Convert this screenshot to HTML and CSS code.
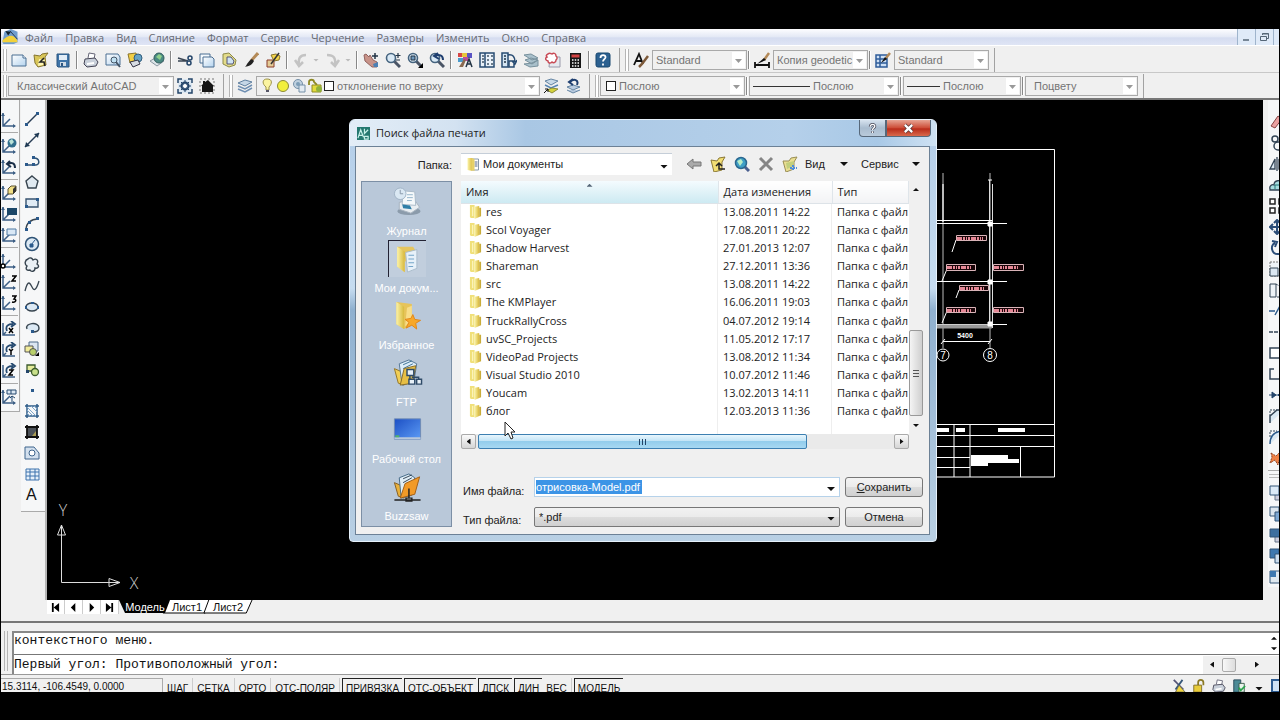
FILE: index.html
```html
<!DOCTYPE html>
<html lang="ru">
<head>
<meta charset="utf-8">
<title>AutoCAD</title>
<link rel="stylesheet" href="styles.css">
</head>
<body>
<svg class="defs" aria-hidden="true">
  <defs>
    <linearGradient id="gold" x1="0" x2="1"><stop offset="0" stop-color="#fbf3a8"/><stop offset="1" stop-color="#d8b93c"/></linearGradient>
    <linearGradient id="blue" x1="0" x2="1" y2="1"><stop offset="0" stop-color="#1c4fc4"/><stop offset="1" stop-color="#5c9bf5"/></linearGradient>
    <linearGradient id="page" x1="0" x2="1" y2="1"><stop offset="0" stop-color="#fff"/><stop offset="1" stop-color="#b4d3ee"/></linearGradient>
    <symbol id="folder" viewBox="0 0 14 16"><path d="M1 1h5v14H2l-1-1z" fill="#f0e07a"/><path d="M6 3l5-1v12l-5 2z" fill="url(#gold)"/><path d="M11 4h2v9l-2 1z" fill="#c9ac3a"/><path d="M4 3v10" stroke="#fffbd0"/></symbol>
    <symbol id="ucs" viewBox="0 0 16 16"><path d="M2 1v13h12M2 14l7-7" fill="none" stroke="#3d5f85" stroke-width="1.5"/><path d="M0 4l2-3 2 3M12 12l3 2-3 2" fill="#3d5f85"/></symbol>
    <symbol id="ucsr" viewBox="0 0 16 16"><path d="M2 2v12h12M2 14l3-3" fill="none" stroke="#3d5f85" stroke-width="1.5"/><path d="M6 10C4 5 7 3 12 3M10 0l4 3-4 3" fill="none" stroke="#25496f" stroke-width="1.8"/></symbol>
    <symbol id="sheets" viewBox="0 0 16 16"><path d="M1 5l7-3 7 2-7 4z" fill="#c5d6e6" stroke="#5f7f9f"/><path d="M1 8l7 3 7-4M1 11l7 3 7-4" fill="none" stroke="#6f8fb2" stroke-width="1.5"/></symbol>
    <symbol id="printer" viewBox="0 0 16 16"><path d="M5 6l1-5 6 1-1 5" fill="#fff" stroke="#667"/><path d="M2 7l10-1 3 4-2 4-9 1-3-3z" fill="#c9d0da" stroke="#445"/><path d="M4 12l7-1" stroke="#fff" stroke-width="2"/></symbol>
    <symbol id="zoomer" viewBox="0 0 16 16"><path d="M9 9l6 6" stroke="#4a5566" stroke-width="3"/><circle cx="6" cy="6" r="4.5" fill="#d9e9f5" stroke="#46647f" stroke-width="1.6"/></symbol>
    <symbol id="brush" viewBox="0 0 16 16"><path d="M15 1L8 9" stroke="#b48a58" stroke-width="3"/><path d="M9 7l2 2c-2 4-5 5-9 6 2-2 3-6 7-8z" fill="#222"/></symbol>
  </defs>
</svg>

<main class="app">
  <header class="menubar">
    <svg class="logo" viewBox="0 0 16 16"><path d="M0 14L2 3l7-3 7 3v11l-4 2H1z" fill="#6f9ccc"/><path d="M3 2l6 1-3 4z" fill="#10202a"/><path d="M0 12c4-4 9-6 12-4 2 2 4 3 4 6H0z" fill="#f2d13a"/><path d="M8 2l8 9" stroke="#23364e"/></svg>
    <nav class="menus">
      <button>Файл</button><button>Правка</button><button>Вид</button><button>Слияние</button><button>Формат</button><button>Сервис</button><button>Черчение</button><button>Размеры</button><button>Изменить</button><button>Окно</button><button>Справка</button>
    </nav>
    <div class="win-btns">
      <button aria-label="Свернуть"><svg viewBox="0 0 12 12"><path d="M3 9h6" stroke="#567" stroke-width="1.5"/></svg></button>
      <button aria-label="Восстановить"><svg viewBox="0 0 12 12"><path d="M4.500 4V2.500h6v5H9M2.500 5.500h6v4h-6zM4.500 3h6" fill="none" stroke="#567"/></svg></button>
      <button aria-label="Закрыть"><svg viewBox="0 0 12 12"><path d="M3 3l6 6M9 3l-6 6" stroke="#567"/></svg></button>
    </div>
  </header>

  <section class="bars">
    <div class="bar" role="toolbar" aria-label="Стандартная">
      <span class="grip"></span>
      <button class="ib" aria-label="Создать"><svg viewBox="0 0 16 16"><path d="M1 3h11l3 3v8H1z" fill="url(#page)" stroke="#4b6e92"/><path d="M12 3v3h3" fill="#fff" stroke="#4b6e92"/></svg></button>
      <button class="ib" aria-label="Открыть"><svg viewBox="0 0 16 16"><path d="M1 3l6 1 2-2 6-1-3 4 1 8-8 2-3-4z" fill="#d9c658" stroke="#857430"/><path d="M6 7l6 1-2 5-5 1z" fill="#fff6b4"/><path d="M11 6l-4 4h4l1 4" stroke="#222" fill="none" stroke-width="1.500"/></svg></button>
      <button class="ib" aria-label="Сохранить файл"><svg viewBox="0 0 16 16"><path d="M2 2h12v13H3l-1-1z" fill="#3f74a8" stroke="#2d5680"/><path d="M4 3h8v5H4z" fill="#e2edf7"/><path d="M5 10h6v4H5z" fill="#cfdbe6"/><path d="M6 11h2v3H6z" fill="#2d5680"/></svg></button>
      <span class="sep"></span>
      <button class="ib" aria-label="Печать"><svg><use href="#printer"/></svg></button>
      <button class="ib" aria-label="Просмотр"><svg viewBox="0 0 16 16"><path d="M1 2h12l2 3v8H1z" fill="url(#page)" stroke="#4b6e92"/><circle cx="9" cy="8" r="3" fill="#bfe0f2" stroke="#456"/><path d="M11 10l4 5" stroke="#456" stroke-width="2"/></svg></button>
      <button class="ib" aria-label="Публикация"><svg viewBox="0 0 16 16"><path d="M1 2l8-1 2 7-8 3z" fill="#f2cf45" stroke="#8a742d"/><circle cx="11" cy="6" r="4" fill="#67a3c4" stroke="#315d7c"/><path d="M3 10l8-2 2 4-7 3z" fill="#d7dce3" stroke="#334"/></svg></button>
      <button class="ib" aria-label="DWF"><svg viewBox="0 0 16 16"><path d="M1 9l7-4 7 4-7 5z" fill="#dbe4e8" stroke="#8a98a2"/><circle cx="10" cy="6" r="5" fill="#4b8a83" stroke="#315d5c"/><path d="M7 5l3-3 3 2-2 4z" fill="#8fd08b"/></svg></button>
      <span class="sep"></span>
      <button class="ib" aria-label="Вырезать"><svg viewBox="0 0 16 16"><path d="M1 6l10 3M1 9h10" stroke="#3a4654" stroke-width="1.500"/><circle cx="13" cy="6" r="2" fill="none" stroke="#24456a" stroke-width="1.500"/><circle cx="12" cy="11" r="2" fill="none" stroke="#24456a" stroke-width="1.500"/></svg></button>
      <button class="ib" aria-label="Копировать"><svg viewBox="0 0 16 16"><path d="M1 2h10v9H1z" fill="#f4f9fd" stroke="#4b6e92"/><path d="M4 5h9l2 2v8H4z" fill="url(#page)" stroke="#4b6e92"/></svg></button>
      <button class="ib" aria-label="Вставить"><svg viewBox="0 0 16 16"><path d="M2 2l6-1 7 7-1 5-6 2-6-3z" fill="#e3dc8a" stroke="#8d8a48"/><path d="M6 5l4 0 3 4-1 3H6z" fill="#cfe3f3" stroke="#557"/></svg></button>
      <button class="ib" aria-label="Кисть"><svg><use href="#brush"/></svg></button>
      <button class="ib" aria-label="Редактор блоков"><svg viewBox="0 0 16 16"><path d="M2 8h7v7H2z" fill="#e4cb96" stroke="#8a3d2a"/><path d="M6 3l5-1 4 2-1 4-5 1z" fill="#f3d54a" stroke="#8a742d"/><path d="M14 1L6 12" stroke="#333" stroke-width="1.500"/></svg></button>
      <span class="sep"></span>
      <button class="ib" aria-label="Отменить"><svg viewBox="0 0 16 16"><path d="M13 3C7 3 5 6 6 14M2 8l4 6 4-4" fill="none" stroke="#c3c3c3" stroke-width="2.500"/></svg></button>
      <button class="dd" aria-label="Список отмены"></button>
      <button class="ib" aria-label="Вернуть"><svg viewBox="0 0 16 16"><path d="M2 3c7 0 9 3 8 11M14 8l-4 6-4-4" fill="none" stroke="#c3c3c3" stroke-width="2.500"/></svg></button>
      <button class="dd" aria-label="Список возврата"></button>
      <span class="sep"></span>
      <button class="ib" aria-label="Панорамирование"><svg viewBox="0 0 16 16"><path d="M1 3l2-1 3 3 1-2 3 5 4 2v5H9L2 9z" fill="#c89389" stroke="#91635f"/><path d="M12 1v6M9 4h6" stroke="#234" stroke-width="1.500"/><path d="M10 12l5-2v5h-4z" fill="#4c80b4"/></svg></button>
      <button class="ib" aria-label="Зумирование"><svg viewBox="0 0 16 16"><use href="#zoomer"/><path d="M13 1v5M10.500 3.500h5M11 8h4" stroke="#234" stroke-width="1.200"/></svg></button>
      <button class="ib" aria-label="Рамка"><svg viewBox="0 0 16 16"><use href="#zoomer"/><path d="M4 4h4v4H4z" fill="#6d98bd" stroke="#234"/><path d="M16 11v5h-5z" fill="#000"/></svg></button>
      <button class="ib" aria-label="Предыдущий вид"><svg viewBox="0 0 16 16"><use href="#zoomer"/><path d="M14 8c0-5-4-6-8-4M9 1L5 4l5 3" fill="none" stroke="#1f3f70" stroke-width="2"/></svg></button>
      <span class="sep"></span>
      <button class="ib" aria-label="Свойства"><svg viewBox="0 0 16 16"><path d="M1 1h4v4H1z" fill="#d64545"/><path d="M5 1h5v4H5z" fill="#e7c63a"/><path d="M10 1h5v5h-5z" fill="#5a54c4"/><path d="M1 6h5v4H1z" fill="#4a9bcc"/><path d="M6 5h5v4H6z" fill="#bb4d9c"/><path d="M2 15l5-8 2 1-3 7" fill="#8a6a50"/><path d="M9 15l3-8 3 8M10 12h4" stroke="#234" fill="none" stroke-width="1.500"/></svg></button>
      <button class="ib" aria-label="Центр управления"><svg viewBox="0 0 16 16"><path d="M1 1h14v14H1zM6 1v14" fill="#eaf2fa" stroke="#274b72" stroke-width="1.500"/><path d="M3 4h2M3 7h2M3 10h2M8 4h2M12 4h2M8 8h2M12 8h2M8 12h2M12 12h2" stroke="#456" stroke-width="1.500"/></svg></button>
      <button class="ib" aria-label="Палитры"><svg viewBox="0 0 16 16"><path d="M1 1h6v14H1z" fill="#d4e5f3" stroke="#274b72" stroke-width="1.500"/><path d="M3 4h2M3 7h2M3 10h2" stroke="#234" stroke-width="1.500"/><path d="M7 3c5-1 7 2 7 7M11 9l3 3 2-4M8 9h5v6H8z" fill="none" stroke="#274b72" stroke-width="1.500"/></svg></button>
      <button class="ib" aria-label="Подшивки"><svg viewBox="0 0 16 16"><path d="M1 3l7-1 7 4-6 2zM2 8l6-2 7 2-6 4zM1 12l8-1 6-3v6l-8 1z" fill="#a9c0cb" stroke="#78919d"/></svg></button>
      <button class="ib" aria-label="Пометки"><svg viewBox="0 0 16 16"><path d="M5 5h10v10H4z" fill="#e6e9ef" stroke="#99a"/><path d="M3 2c2-2 3 0 4 0 2-2 4 0 4 2 2 2 1 3 0 4 0 3-3 3-4 2-2 2-4 1-4-1C0 8 0 6 2 5 1 4 1 3 3 2z" fill="#fff" stroke="#c84a55" stroke-width="1.500"/></svg></button>
      <button class="ib" aria-label="Калькулятор"><svg viewBox="0 0 16 16"><path d="M3 1h11v15H3z" fill="#161616"/><path d="M4.500 2.500h8v3h-8z" fill="#d04040"/><path d="M5 8h7M5 11h7M5 14h7" stroke="#fff" stroke-width="1.500" stroke-dasharray="1.500 1.250"/></svg></button>
      <span class="sep"></span>
      <button class="ib" aria-label="Справка AutoCAD"><svg viewBox="0 0 16 16"><rect x="1" y="1" width="14" height="14" rx="2" fill="#2b6090" stroke="#17466f"/><path d="M5.500 6c0-4 5.500-3.500 5-.5C10.300 7 8 7.500 8 9.500M8 11.500v2" fill="none" stroke="#fff" stroke-width="1.800"/></svg></button>
      <span class="end"></span>
      <span class="grip"></span>
      <button class="ib" aria-label="Стиль текста"><svg viewBox="0 0 16 16"><path d="M1 13L6 2l4 10M3 9h6" fill="none" stroke="#111" stroke-width="1.800"/><path d="M15 4l-6 8-3 3" stroke="#7e5a3a" stroke-width="2.500"/></svg></button>
      <span class="combo w95"><select aria-label="Текстовый стиль"><option>Standard</option></select></span>
      <span class="sep"></span>
      <button class="ib" aria-label="Размерный стиль"><svg viewBox="0 0 16 16"><path d="M15 1l-5 7" stroke="#b48a58" stroke-width="2.500"/><path d="M10 6l2 2-9 4z" fill="#111"/><path d="M1 10v6M15 10v6M1 13h14" stroke="#111" stroke-width="1.800"/></svg></button>
      <span class="combo w95"><select aria-label="Размеры стиль"><option>Копия geodetic</option></select></span>
      <span class="sep"></span>
      <button class="ib" aria-label="Стиль таблиц"><svg viewBox="0 0 16 16"><path d="M1 3h11v12H1zM1 7h11M1 11h11M5 3v12" fill="#cfe0f4" stroke="#2f5c99" stroke-width="1.500"/><path d="M15 1l-4 5" stroke="#b48a58" stroke-width="2.500"/><path d="M10 5l2 2-6 4z" fill="#111"/></svg></button>
      <span class="combo w95"><select aria-label="Табличный стиль"><option>Standard</option></select></span>
      <span class="end"></span>
    </div>

    <div class="bar" role="toolbar" aria-label="Слои и свойства">
      <span class="grip"></span>
      <span class="combo w166 roomy"><select aria-label="Рабочее пространство"><option>Классический AutoCAD</option></select></span>
      <button class="ib" aria-label="Параметры"><svg viewBox="0 0 16 16"><path d="M1 1h14v14H1z" fill="#dce8f3"/><path d="M1 5V1h4M11 1h4v4M15 11v4h-4M5 15H1v-4" fill="none" stroke="#24456a" stroke-width="1.500"/><circle cx="8" cy="8" r="3.500" fill="none" stroke="#24456a" stroke-width="2"/><path d="M8 2v12M2 8h12M4 4l8 8M12 4l-8 8" stroke="#24456a"/><circle cx="8" cy="8" r="2" fill="#fff"/></svg></button>
      <button class="ib" aria-label="Мое пространство"><svg viewBox="0 0 16 16"><path d="M1 1h14v14H1z" fill="none" stroke="#777" stroke-dasharray="2 2"/><path d="M2 8l2-2V3h2v1l3-2 6 6h-1v6H3V8z" fill="#161616"/></svg></button>
      <span class="end"></span>
      <span class="grip"></span>
      <button class="ib" aria-label="Диспетчер слоев"><svg><use href="#sheets"/></svg></button>
      <span class="combo layer">
        <svg viewBox="0 0 62 16"><path d="M5 1c6 0 5 5 2 8v3H4V9C0 6 0 1 5 1z" fill="#fbf4a0" stroke="#9c9348"/><path d="M4 13h3" stroke="#556" stroke-width="2"/><circle cx="21" cy="8" r="5.500" fill="#f2f03c" stroke="#8b8a35"/><circle cx="36" cy="6" r="4.500" fill="#bfd0df" stroke="#7590a8"/><path d="M37 7h6v7h-6z" fill="#e3ebf2" stroke="#7590a8"/><circle cx="36" cy="6" r="2" fill="#7d9db8"/><path d="M47 7V4c0-3 5-3 5 0l3 3" fill="none" stroke="#8e8a25" stroke-width="1.800"/><path d="M50 7h9v7h-9z" fill="#e2db3c" stroke="#8e8a25"/><circle cx="57" cy="11" r="3" fill="#8fb13b"/></svg>
        <i class="swatch"></i>
        <select aria-label="Слой"><option>отклонение по верху</option></select></span>
      <button class="ib" aria-label="Сделать слой текущим"><svg viewBox="0 0 16 16"><path d="M2 3l6-2 7 2-7 4z" fill="#c8d9e8" stroke="#6585a3"/><path d="M2 7l6 3 7-3" fill="none" stroke="#5584b3" stroke-width="1.500"/><path d="M4 12l5-2 6 1-6 4z" fill="#d4d23c" stroke="#8b8b35"/><path d="M1 15l4-4M2 11h3v3" stroke="#111" fill="none"/></svg></button>
      <button class="ib" aria-label="Предыдущее состояние"><svg viewBox="0 0 16 16"><path d="M2 9l6-2 7 2-7 3zM2 12l6 3 7-3" fill="#b9cbe0" stroke="#6585a3"/><path d="M12 7c2-5-3-7-7-3M8 1L4 4l4 3" fill="none" stroke="#1f3f70" stroke-width="2"/></svg></button>
      <span class="end"></span>
      <span class="grip"></span>
      <span class="combo w145"><i class="swatch first"></i><select aria-label="Цвет"><option>Послою</option></select></span>
      <span class="sep"></span>
      <span class="combo w150"><i class="line"></i><select aria-label="Тип линии"><option>Послою</option></select></span>
      <span class="sep"></span>
      <span class="combo w118"><i class="line short"></i><select aria-label="Вес линии"><option>Послою</option></select></span>
      <span class="sep"></span>
      <span class="combo w113 roomy"><select aria-label="Стиль печати"><option>Поцвету</option></select></span>
      <span class="end"></span>
    </div>
  </section>

  <section class="work">
    <aside class="dock left">
      <div class="col ucs" role="toolbar" aria-label="ПСК">
        <button aria-label="ПСК"><svg><use href="#ucs"/></svg></button><hr>
        <button aria-label="Мировая"><svg viewBox="0 0 16 16"><use href="#ucs"/><circle cx="11" cy="5" r="4.500" fill="#316f8d"/><path d="M8 3l3-2 2 3-3 3z" fill="#b9e2d8"/></svg></button>
        <button aria-label="ПСК предыдущая"><svg viewBox="0 0 16 16"><use href="#ucs"/><path d="M14 9c0-5-3-6-7-4M9 2L6 5l4 3" fill="none" stroke="#1b2f48" stroke-width="2"/></svg></button><hr>
        <button aria-label="Грань"><svg viewBox="0 0 16 16"><use href="#ucs"/><path d="M7 4l3-3h5v5l-3 3H7z" fill="#f1df86" stroke="#5c5330"/><path d="M12 4l3-3v5l-3 3z" fill="#333"/></svg></button>
        <button aria-label="Объект"><svg viewBox="0 0 16 16"><use href="#ucs"/><path d="M6 2h10v7H6z" fill="#1c4768"/></svg></button>
        <button aria-label="Вид ПСК"><svg viewBox="0 0 16 16"><use href="#ucs"/><path d="M6 2h9v6H6z" fill="#d9e8f6" stroke="#4f78a2"/></svg></button><hr>
        <button aria-label="Начало"><svg viewBox="0 0 16 16"><use href="#ucs"/><circle cx="2" cy="13" r="2" fill="#fff" stroke="#000" stroke-width="1.500"/></svg></button>
        <button aria-label="Ось Z"><svg viewBox="0 0 16 16"><use href="#ucs"/><path d="M11 2h4l-4 5h4" fill="none" stroke="#000" stroke-width="1.500"/></svg></button>
        <button aria-label="Три точки"><svg viewBox="0 0 16 16"><use href="#ucs"/><path d="M11 1h4l-2 3c3 0 2 4-2 3" fill="none" stroke="#000" stroke-width="1.500"/></svg></button><hr>
        <button aria-label="Поворот X"><svg viewBox="0 0 16 16"><use href="#ucsr"/><path d="M8 7l4 5M12 7l-4 5" stroke="#000" stroke-width="1.500"/></svg></button>
        <button aria-label="Поворот Y"><svg viewBox="0 0 16 16"><use href="#ucsr"/><path d="M8 7l2 2 2-2M10 9v4" fill="none" stroke="#000" stroke-width="1.500"/></svg></button>
        <button aria-label="Поворот Z"><svg viewBox="0 0 16 16"><use href="#ucsr"/><path d="M8 7h4l-4 5h4" fill="none" stroke="#000" stroke-width="1.500"/></svg></button><hr>
        <button aria-label="Применить"><svg viewBox="0 0 16 16"><use href="#ucs"/><path d="M6 1h9v4H6zM10 1v4M11 13V7l-2 2M11 7l3 2" fill="#dce8f4" stroke="#25496f"/></svg></button>
      </div>
      <div class="col draw" role="toolbar" aria-label="Рисование">
        <button aria-label="Отрезок"><svg viewBox="0 0 16 16"><path d="M2 14L14 2" stroke="#273c54" stroke-width="1.500"/><path d="M1 12h3v3H1zM12 1h3v3h-3z" fill="#2b5a8c"/></svg></button>
        <button aria-label="Прямая"><svg viewBox="0 0 16 16"><path d="M1 15L15 1" stroke="#273c54" stroke-width="1.500"/><path d="M1 15l1-5 4 4zM15 1l-1 5-4-4z" fill="#1d3853"/></svg></button>
        <button aria-label="Полилиния"><svg viewBox="0 0 16 16"><path d="M2 12h10c4 0 4-7-2-7" fill="none" stroke="#2e5275" stroke-width="1.500"/><path d="M1 10h3v3H1zM8 10h3v3H8zM8 3h3v3H8z" fill="#2b5a8c"/></svg></button>
        <button aria-label="Многоугольник"><svg viewBox="0 0 16 16"><path d="M8 2l6 5-2 7H4L2 7z" fill="#e0e9f0" stroke="#37444f" stroke-width="1.400"/></svg></button>
        <button aria-label="Прямоугольник"><svg viewBox="0 0 16 16"><path d="M2 4h12v8H2z" fill="#e0ebf5" stroke="#37536f" stroke-width="1.400"/><path d="M1 10h3v3H1zM12 3h3v3h-3z" fill="#2b5a8c"/></svg></button>
        <button aria-label="Дуга"><svg viewBox="0 0 16 16"><path d="M2 14C2 7 7 3 14 3" fill="none" stroke="#37444f" stroke-width="1.400"/><path d="M1 12h3v3H1zM4 5h3v3H4zM12 1h3v3h-3z" fill="#2b5a8c"/></svg></button>
        <button aria-label="Круг"><svg viewBox="0 0 16 16"><circle cx="8" cy="8" r="6.500" fill="#dce9f4" stroke="#2e5275" stroke-width="1.500"/><path d="M7 9l4-5M6 8h3v3H6z" stroke="#2b5a8c" fill="#2b5a8c"/></svg></button>
        <button aria-label="Облако"><svg viewBox="0 0 16 16"><path d="M4 2c2-2 4-1 5 1 3-2 6 0 4 4 3 2 1 5-2 4 0 4-4 4-5 2-3 1-5-1-3-4C0 7 1 3 4 2z" fill="#eaf0f5" stroke="#37444f" stroke-width="1.400"/></svg></button>
        <button aria-label="Сплайн"><svg viewBox="0 0 16 16"><path d="M1 13C4 1 6 5 8 9s4 4 7-6" fill="none" stroke="#37444f" stroke-width="1.300"/></svg></button>
        <button aria-label="Эллипс"><svg viewBox="0 0 16 16"><ellipse cx="8" cy="8" rx="6" ry="4" fill="#dce9f4" stroke="#37444f" stroke-width="1.400"/><path d="M1 7h2v3H1zM13 7h2v3h-2zM7 3h3v2H7z" fill="#2b5a8c"/></svg></button>
        <button aria-label="Эллиптическая дуга"><svg viewBox="0 0 16 16"><path d="M3 9c-3-6 12-8 12-1 0 4-4 4-6 4" fill="#dce9f4" stroke="#37444f" stroke-width="1.400"/><path d="M7 10h3v3H7z" fill="#2b5a8c"/></svg></button>
        <button aria-label="Вставить блок"><svg viewBox="0 0 16 16"><path d="M5 1h9v9H5z" fill="#dbe6f2" stroke="#4f6a88"/><path d="M1 5h8v6H1z" fill="#f1ec9b" stroke="#555"/><circle cx="9" cy="11" r="3.500" fill="#b8cf6a" stroke="#555"/><path d="M15 11v4h-4z"/></svg></button>
        <button aria-label="Создать блок"><svg viewBox="0 0 16 16"><path d="M3 3h8v6H3z" fill="#e5ec9b" stroke="#3c5b2e" stroke-width="1.300"/><circle cx="11" cy="10" r="3.500" fill="#c9e08a" stroke="#3c5b2e" stroke-width="1.300"/><path d="M2 8h3v3H2z" fill="#24456a"/></svg></button>
        <button aria-label="Точка"><svg viewBox="0 0 16 16"><path d="M7 7h3v3H7z" fill="#2b5a8c"/></svg></button>
        <button aria-label="Штриховка"><svg viewBox="0 0 16 16"><path d="M3 1v14M13 1v14M1 3h14M1 13h14" stroke="#2e5c88" stroke-width="1.500"/><path d="M3 7l6 6M3 4l9 9M7 3l6 6M3 10l3 3M10 3l3 3" stroke="#7ea7cc"/></svg></button>
        <button aria-label="Градиент"><svg viewBox="0 0 16 16"><path d="M3 3h10v10H3z" fill="#4b5158"/><path d="M3 1v14M13 1v14M1 3h14M1 13h14" stroke="#111" stroke-width="1.800"/><path d="M8 12l4-5v5z" fill="#aa9d54"/></svg></button>
        <button aria-label="Область"><svg viewBox="0 0 16 16"><path d="M1 2h9l5 6v6H1z" fill="#d3e0ee" stroke="#3f658d"/><circle cx="8" cy="8" r="3" fill="#fff" stroke="#3f658d"/></svg></button>
        <button aria-label="Таблица"><svg viewBox="0 0 16 16"><path d="M2 3h13v11H2zM2 6h13M2 10h13M6 3v11M11 3v11" fill="#e6f0fa" stroke="#3d73ad"/></svg></button>
        <button aria-label="Текст" class="letter">A</button>
      </div>
    </aside>

    <div class="canvas">
      <svg class="drawing" viewBox="47 100 1216 500" preserveAspectRatio="xMinYMin meet">
        <g fill="none" stroke="#fff">
          <path d="M900 149.500h154.500v327.500H900"/>
          <path d="M900 424.500h154M900 435.500h154M900 446.500h154M900 457.500h70M900 467.500h70M954 424v53M970 424v53M1020.500 446v31"/>
          <path d="M943 173v175M990 173v175" stroke="#bbb"/>
          <path d="M943 184v38" stroke="#bbb" stroke-width="2"/>
          <path d="M989.500 180v147M992.500 184v144" stroke="#ddd"/>
          <path d="M937 220.500h55M937 223.500h70M937 281.500h70M937 324.500h70" />
          <path d="M937 326.500h55" stroke="#999" stroke-width="4"/>
          <path d="M943 341.500h47M941 344l4-5M988 344l4-5M988 180h4"/>
          <circle cx="943" cy="355" r="6"/><circle cx="990" cy="355" r="6.500"/>
          <path d="M956 240l-4 12M947 269l-5 12M959 290l-3 8M947 311l-5 12"/>
          <path d="M988 222h4v4h-4zM988 280h4v4h-4zM988 322h4v4h-4z" fill="#fff"/>
        </g>
        <g fill="#1a0508" stroke="#d9b3b8"><path d="M956.500 235.500h30v5h-30zM946.500 264.500h29v6h-29zM993.500 264.500h30v6h-30zM959.500 285.500h29v5h-29zM946.500 307.500h29v5h-29zM993.500 307.500h30v5h-30z"/></g>
        <g stroke="#e58896" stroke-width="3" stroke-dasharray="5 1 2 1 1 1 2 1"><path d="M957 238.500h26M947 267.500h24M994 267.500h24M960 288.500h24M947 310.500h24M994 310.500h24"/></g>
        <g fill="#fff"><path d="M937 428h12v4h-12zM956 428h9v4h-9zM998 428h27v4h-27zM971 455h37v4h11v4h-31v3h-17z"/></g>
        <g class="cad-text"><text x="965" y="338" class="small">5400</text><text x="943" y="359" class="axis">7</text><text x="990" y="359" class="axis">8</text><text x="63" y="516" class="big">Y</text><text x="134" y="589" class="big">X</text></g>
        <path d="M61.500 535v47.500H110" fill="none" stroke="#ddd"/>
        <path d="M57.500 535l4-10 4 10zM109 578.500l11 4-11 4zM109 582.500h11M61.500 525v10" fill="none" stroke="#ddd"/>
      </svg>

      <section class="dialog" role="dialog" aria-labelledby="dlg-title">
        <header class="title">
          <svg viewBox="0 0 14 14"><path d="M0 0h14v14H0z" fill="#24786f"/><path d="M1 12l3-9 3 8M2 9h4M8 2v5l4-4M8 10h4v3H8z" stroke="#c7f0e8" fill="none" stroke-width="1.300"/></svg>
          <h1 id="dlg-title">Поиск файла печати</h1>
          <button class="help" aria-label="Помощь"><svg viewBox="0 0 12 12"><path d="M3.500 4c0-3.500 5.500-3 5-.3C8.200 5.500 6 5.500 6 7.500M6 9v2" fill="none" stroke="#445" stroke-width="3"/><path d="M3.500 4c0-3.500 5.500-3 5-.3C8.200 5.500 6 5.500 6 7.500M6 9v2" fill="none" stroke="#fff" stroke-width="1.500"/></svg></button>
          <button class="close" aria-label="Закрыть окно"><svg viewBox="0 0 12 12"><path d="M2 2l8 8M10 2l-8 8" stroke="#533" stroke-width="4"/><path d="M2 2l8 8M10 2l-8 8" stroke="#fff" stroke-width="2.500"/></svg></button>
        </header>
        <div class="dbody">
          <label class="lbl-folder" for="folder-sel">Папка:</label>
          <div class="toprow">
            <span class="dcombo look"><svg viewBox="0 0 14 16"><path d="M1 2h5v13l-5-1z" fill="url(#gold)"/><path d="M6 3h6v11H6z" fill="#fff" stroke="#89a"/><path d="M8 6h3M8 8h3M8 10h3" stroke="#568"/><path d="M5 2l3 1v12l-3-1z" fill="#e6d067"/></svg><select id="folder-sel"><option>Мои документы</option></select></span>
            <button aria-label="Назад"><svg viewBox="0 0 16 16"><path d="M1 8l6-5v3h8v4H7v3z" fill="#aaa" stroke="#777"/></svg></button>
            <button aria-label="Вверх"><svg viewBox="0 0 16 16"><path d="M1 4l6 1 2-3 6-1-3 5v8l-8 2z" fill="#f2de74" stroke="#8b7936"/><path d="M6 10l3-3 3 3M9 7v6h6" fill="none" stroke="#222" stroke-width="1.500"/></svg></button>
            <button aria-label="Поиск в сети"><svg viewBox="0 0 16 16"><path d="M10 10l5 5" stroke="#4a5f8f" stroke-width="3"/><circle cx="7" cy="7" r="5.500" fill="#3f9fc6" stroke="#2b678f" stroke-width="1.500"/><path d="M3 5l4-2 2 3-3 4z" fill="#b9ecc8"/></svg></button>
            <button aria-label="Удалить"><svg viewBox="0 0 16 16"><path d="M2 2l12 12M14 2L2 14" stroke="#858585" stroke-width="3"/></svg></button>
            <button aria-label="Новая папка"><svg viewBox="0 0 16 16"><path d="M1 5l6 0 2-3 6-1-3 5v7l-8 3z" fill="#eadf92" stroke="#9a8e55"/><path d="M4 7l8-2-1 5-6 3z" fill="#c2cf7d"/><path d="M11 9v6M8 12h7" stroke="#4b8bdc" stroke-width="2" stroke-dasharray="2 1"/></svg></button>
            <button class="txt view">Вид<i class="tri"></i></button>
            <button class="txt">Сервис<i class="tri"></i></button>
          </div>

          <nav class="places">
            <button><svg viewBox="0 0 32 32"><ellipse cx="18" cy="26" rx="12" ry="4" fill="#8b9bab"/><path d="M8 17l15-4 6 9-9 6-12-4z" fill="#e9eef2" stroke="#a6b3bf"/><path d="M12 5l12 1 1 14-14-1z" fill="#f5f9fb" stroke="#a9bac8"/><circle cx="9" cy="8" r="6" fill="#dae8f3" stroke="#a1b4c6"/><path d="M9 8V4M9 8h3" stroke="#89a"/><path d="M11 19l8 1 2 4-9-1z" fill="#2f7fa8"/><path d="M16 9h6M16 12h6M16 15h5" stroke="#94b5cb"/></svg><span>Журнал</span></button>
            <button class="on"><svg viewBox="0 0 32 32"><path d="M5 3l8 4v23l-8-6z" fill="#f2d77a"/><path d="M5 3h17l2 3v18h-7z" fill="#e5c55e"/><path d="M14 9l12-3v20l-10 4z" fill="#e7f1f9" stroke="#a9bbca"/><path d="M17 12h6M17 16h6M17 20h6M17 24h5" stroke="#6da0c5"/><path d="M5 3l8 5v22l-8-6z" fill="url(#gold)"/></svg><span>Мои докум...</span></button>
            <button><svg viewBox="0 0 32 32"><path d="M5 2l16 2v20l-8 6-8-5z" fill="#e7c45a"/><path d="M5 2l8 5v23l-8-5z" fill="url(#gold)"/><path d="M16 8l5-2v15l-7 6" fill="#f8dd89"/><path d="M22 15l2 5 6 1-5 3 1 6-5-4-6 3 3-6-4-3 6-1z" fill="#f8a829" stroke="#e28617"/></svg><span>Избранное</span></button>
            <button><svg viewBox="0 0 32 32"><path d="M3 12l7 3 3 14-6-2z" fill="#f1cf57" stroke="#957627"/><path d="M8 7l10-4 8 4-3 19-12 3z" fill="#dcecf7" stroke="#557796"/><path d="M12 8l9-4M12 12l10-5" stroke="#3e7396"/><path d="M9 29l4-17 12-3-3 18z" fill="#e7bf45" stroke="#8a6c28"/><path d="M16 13h7v6h-7zM18 23h6v5h-6zM26 23h5v5h-5zM19 19v4M21 21h7v2" fill="#e9f1f8" stroke="#2f4b68" stroke-width="1.500"/></svg><span>FTP</span></button>
            <button><svg viewBox="0 0 32 32"><path d="M3 5h27v21H3z" fill="url(#blue)" stroke="#6f8bb4"/><path d="M3 25h27" stroke="#b8c8dc" stroke-width="2"/><path d="M4 23h4" stroke="#55b566" stroke-width="2"/></svg><span>Рабочий стол</span></button>
            <button><svg viewBox="0 0 32 32"><path d="M3 12l7 3 3 13-6-2z" fill="#e9b13b" stroke="#855f26"/><path d="M8 7l10-4 6 4-3 18-11 3z" fill="#e0edf6" stroke="#456a87"/><path d="M12 8l9-4M12 12l9-5" stroke="#345"/><path d="M9 28l5-15 15-7-5 18z" fill="#f29a27" stroke="#a35f17"/><path d="M3 30h27M18 18v10M15 28h6v3h-6z" stroke="#222" stroke-width="1.500" fill="#fff"/></svg><span>Buzzsaw</span></button>
          </nav>

          <div class="listwrap">
            <div class="list">
              <table>
                <colgroup><col class="c1"><col class="c2"><col class="c3"></colgroup>
                <thead><tr><th class="sorted">Имя</th><th>Дата изменения</th><th>Тип</th></tr></thead>
                <tbody>
                  <tr><td><svg><use href="#folder"/></svg>res</td><td>13.08.2011 14:22</td><td>Папка с файл</td></tr>
                  <tr><td><svg><use href="#folder"/></svg>Scol Voyager</td><td>17.08.2011 20:22</td><td>Папка с файл</td></tr>
                  <tr><td><svg><use href="#folder"/></svg>Shadow Harvest</td><td>27.01.2013 12:07</td><td>Папка с файл</td></tr>
                  <tr><td><svg><use href="#folder"/></svg>Shareman</td><td>27.12.2011 13:36</td><td>Папка с файл</td></tr>
                  <tr><td><svg><use href="#folder"/></svg>src</td><td>13.08.2011 14:22</td><td>Папка с файл</td></tr>
                  <tr><td><svg><use href="#folder"/></svg>The KMPlayer</td><td>16.06.2011 19:03</td><td>Папка с файл</td></tr>
                  <tr><td><svg><use href="#folder"/></svg>TruckRallyCross</td><td>04.07.2012 19:14</td><td>Папка с файл</td></tr>
                  <tr><td><svg><use href="#folder"/></svg>uvSC_Projects</td><td>11.05.2012 17:17</td><td>Папка с файл</td></tr>
                  <tr><td><svg><use href="#folder"/></svg>VideoPad Projects</td><td>13.08.2012 11:34</td><td>Папка с файл</td></tr>
                  <tr><td><svg><use href="#folder"/></svg>Visual Studio 2010</td><td>10.07.2012 11:46</td><td>Папка с файл</td></tr>
                  <tr><td><svg><use href="#folder"/></svg>Youcam</td><td>13.02.2013 14:11</td><td>Папка с файл</td></tr>
                  <tr><td><svg><use href="#folder"/></svg>блог</td><td>12.03.2013 11:36</td><td>Папка с файл</td></tr>
                </tbody>
              </table>
            </div>
            <div class="vscroll"><i class="tri up"></i><span class="track"><span class="thumb"><i></i><i></i><i></i></span></span><i class="tri small"></i></div>
            <div class="hscroll"><button aria-label="Влево"><i class="tri lft"></i></button><span class="thumb"><i></i><i></i><i></i></span><span class="rest"></span><button aria-label="Вправо"><i class="tri rgt"></i></button></div>
          </div>

          <form class="fields">
            <label for="fname">Имя файла:</label>
            <span class="dcombo name"><input id="fname" type="text" value="отрисовка-Model.pdf"></span>
            <button type="button"><u>С</u>охранить</button>
            <label for="ftype">Тип файла:</label>
            <span class="dcombo type"><select id="ftype"><option>*.pdf</option></select></span>
            <button type="button">Отмена</button>
          </form>
        </div>
        <svg class="cursor" viewBox="0 0 12 19"><path d="M1 1v14l3-3 3 6 2-1-2-6h4z" fill="#fff" stroke="#222"/></svg>
      </section>
    </div>

    <aside class="dock right">
      <div class="col edit" role="toolbar" aria-label="Редактирование">
        <button aria-label="Стереть"><svg viewBox="0 0 16 16"><path d="M2 12L9 2l4 3-7 9z" fill="#e9a0a0" stroke="#844"/></svg></button>
        <button aria-label="Копия"><svg viewBox="0 0 16 16"><circle cx="6" cy="4" r="3" fill="none" stroke="#345" stroke-width="1.500"/><circle cx="9" cy="11" r="4" fill="none" stroke="#345" stroke-width="1.500"/></svg></button>
        <button aria-label="Зеркало"><svg viewBox="0 0 16 16"><path d="M1 13L6 3v10zM8 1v14M10 3v10h5z" fill="#dbe7f2" stroke="#345" stroke-width="1.300"/></svg></button>
        <button aria-label="Подобие"><svg viewBox="0 0 16 16"><path d="M1 12c-1-3 2-5 4-4 0-5 7-6 8-1 3 1 3 6 0 6H1z" fill="#a9dce0" stroke="#345" stroke-width="1.300"/><path d="M6 12V8h5" fill="none" stroke="#277"/></svg></button>
        <button aria-label="Массив"><svg viewBox="0 0 16 16"><path d="M1 1h5v5H1zM10 1h5v5h-5zM1 10h5v5H1zM10 10h5v5h-5z" fill="#fff" stroke="#222" stroke-width="1.500"/></svg></button>
        <button aria-label="Перенести"><svg viewBox="0 0 16 16"><path d="M8 1v14M1 8h14M5 4l3-3 3 3M4 5L1 8l3 3M5 12l3 3 3-3" fill="none" stroke="#2b4d78" stroke-width="2"/></svg></button>
        <button aria-label="Повернуть"><svg viewBox="0 0 16 16"><path d="M10 14C2 15 1 5 6 3M3 1l5 1-2 5" fill="none" stroke="#2b4d78" stroke-width="2"/></svg></button>
        <button aria-label="Масштаб"><svg viewBox="0 0 16 16"><path d="M1 1h14v14H1z" fill="#eef3f7" stroke="#777" stroke-dasharray="2 1"/><path d="M1 7h8v8H1z" fill="#dbe7f2" stroke="#345"/></svg></button>
        <button aria-label="Растянуть"><svg viewBox="0 0 16 16"><path d="M1 2h6v13H1z" fill="#eef3f7" stroke="#345"/><path d="M7 2l7 4v9H7" fill="none" stroke="#345" stroke-dasharray="2 1"/></svg></button>
        <button aria-label="Обрезать"><svg viewBox="0 0 16 16"><path d="M0 8h6M6 12l5-9M12 8h4" stroke="#2b5a8c" stroke-width="1.500"/></svg></button>
        <button aria-label="Удлинить"><svg viewBox="0 0 16 16"><path d="M0 8h16" stroke="#345" stroke-width="1.500" stroke-dasharray="4 1"/></svg></button>
        <button aria-label="Разорвать в точке"><svg viewBox="0 0 16 16"><path d="M1 3h14v10H1z" fill="#fff" stroke="#345" stroke-width="1.500"/></svg></button>
        <button aria-label="Разорвать"><svg viewBox="0 0 16 16"><path d="M5 3H1v10h14V3h-4" fill="none" stroke="#345" stroke-width="1.500"/></svg></button>
        <button aria-label="Соединить"><svg viewBox="0 0 16 16"><path d="M0 8h16M3 5l4 3-4 3zM13 5L9 8l4 3z" fill="#24456a" stroke="#24456a"/></svg></button>
        <button aria-label="Фаска"><svg viewBox="0 0 16 16"><path d="M1 15V8l7-6h7" fill="#dbe9f3" stroke="#345" stroke-width="1.500"/><path d="M1 8V2h7" fill="none" stroke="#345" stroke-dasharray="2 1"/></svg></button>
        <button aria-label="Сопряжение"><svg viewBox="0 0 16 16"><path d="M1 15C1 6 6 2 15 2" fill="#dbe9f3" stroke="#2b5a8c" stroke-width="1.500"/><path d="M1 8V2h7" fill="none" stroke="#345" stroke-dasharray="2 1"/></svg></button>
        <button aria-label="Расчленить"><svg viewBox="0 0 16 16"><path d="M2 3l5 3 5-5 3 6-5 3-1 5-3-5-5 3 2-6z" fill="#ee8146" stroke="#90401f" stroke-dasharray="2 1"/></svg></button>
      </div>
      <div class="col order" role="toolbar" aria-label="Порядок">
        <span class="hgrip"></span>
        <button aria-label="Вперед"><svg viewBox="0 0 16 16"><path d="M6 6h9v9H6z" fill="#ccd" stroke="#678"/><path d="M1 1h9v9H1z" fill="#dceaf7" stroke="#357"/></svg></button>
        <button aria-label="Назад порядок"><svg viewBox="0 0 16 16"><path d="M1 1h9v9H1z" fill="#dce6ef" stroke="#357"/><path d="M6 6h9v9H6z" fill="#7da7d2" stroke="#357"/></svg></button>
        <button aria-label="Над"><svg viewBox="0 0 16 16"><path d="M6 6h9v9H6z" fill="#ccd" stroke="#678"/><path d="M1 2h10v8H1z" fill="#3e6f9f" stroke="#357"/></svg></button>
        <button aria-label="Под"><svg viewBox="0 0 16 16"><path d="M1 1h9v9H1z" fill="#3e78b0" stroke="#357"/><path d="M6 6h9v9H6z" fill="#cde" stroke="#357"/></svg></button>
        <button aria-label="Текст вперед"><svg viewBox="0 0 16 16"><path d="M1 2h10v12H1z" fill="#dfe8ef" stroke="#357"/><path d="M1 2h6v6H1z" fill="#3e78b0"/></svg></button>
      </div>
    </aside>
  </section>

  <nav class="tabs">
    <button class="step" aria-label="Первый"><svg viewBox="0 0 10 10"><path d="M1 0h2v10H1zM9 0v10L3 5z"/></svg></button>
    <button class="step" aria-label="Предыдущий"><svg viewBox="0 0 10 10"><path d="M7 0v10L2 5z"/></svg></button>
    <button class="step" aria-label="Следующий"><svg viewBox="0 0 10 10"><path d="M3 0v10l5-5z"/></svg></button>
    <button class="step" aria-label="Последний"><svg viewBox="0 0 10 10"><path d="M7 0h2v10H7zM1 0v10l6-5z"/></svg></button>
    <button class="tab active"><svg viewBox="0 0 52 14" preserveAspectRatio="none"><path d="M0 0l6 13h40l5-13z" fill="#000"/></svg><span>Модель</span></button>
    <button class="tab"><svg viewBox="0 0 52 14" preserveAspectRatio="none"><path d="M6 0L1 13h44l6-13" fill="#fff" stroke="#000"/></svg><span>Лист1</span></button>
    <button class="tab"><svg viewBox="0 0 52 14" preserveAspectRatio="none"><path d="M6 0L1 13h44l6-13" fill="#fff" stroke="#000"/></svg><span>Лист2</span></button>
  </nav>

  <section class="command">
    <span class="cgrip"></span>
    <div class="console">
      <div class="history"><p>контекстного меню.</p><span class="cv"><i class="tri up"></i><i class="tri small"></i></span></div>
      <div class="prompt"><label for="cmd">Первый угол: Противоположный угол:</label><input id="cmd" type="text"><span class="ch"><i class="tri lft"></i><b></b><i class="tri rgt"></i></span></div>
    </div>
  </section>

  <footer class="status">
    <span class="coords">15.3114, -106.4549, 0.0000</span>
    <button>ШАГ</button><button>СЕТКА</button><button>ОРТО</button><button>ОТС-ПОЛЯР</button><button class="in">ПРИВЯЗКА</button><button class="in">ОТС-ОБЪЕКТ</button><button class="in">ДПСК</button><button class="in">ДИН</button><button>ВЕС</button><button class="in">МОДЕЛЬ</button>
    <div class="tray">
      <svg viewBox="0 0 16 16"><path d="M2 1l11 11" stroke="#557" stroke-width="2"/><path d="M12 1L4 12" stroke="#357" stroke-width="2"/><path d="M8 7l7 8H4z" fill="#f1d53c" stroke="#665"/></svg>
      <svg viewBox="0 0 16 16"><path d="M7 7V4c0-4 6-4 6 0v3" fill="none" stroke="#8b7a25" stroke-width="2"/><path d="M2 7h9v8H2z" fill="#e8cc3a" stroke="#7b6a25"/></svg>
      <svg><use href="#printer"/></svg>
      <svg viewBox="0 0 16 16"><path d="M2 1h8v14H2z" fill="#4c8b96" stroke="#245"/><path d="M8 5h6v10H8z" fill="#e8f3ec" stroke="#354"/><path d="M8 10l2 3 5-5" fill="none" stroke="#26a34a" stroke-width="2"/></svg>
      <i class="tri"></i>
      <svg class="full" viewBox="0 0 8 14"><path d="M1 1h12v12H1z" fill="#cfe2f5" stroke="#2d5c92" stroke-width="2"/></svg>
    </div>
  </footer>
</main>
</body>
</html>
```

FILE: styles.css
```css
* { box-sizing: border-box; }

body {
  margin: 0;
  height: 100vh;
  padding: 29px 1px 28px;
  background: #000;
  color: #111;
  font: 11px/14px "Liberation Sans", Arial, sans-serif;
  overflow: hidden;
}

button, select, input {
  font: inherit;
  color: inherit;
  background: none;
  border: 0;
  border-radius: 0;
  padding: 0;
  margin: 0;
  outline: 0;
}

select { appearance: none; }
svg { display: block; flex: none; }
.defs { position: absolute; width: 0; height: 0; }

.app {
  display: flex;
  flex-direction: column;
  height: 100%;
  background: #f0f0f0;
  overflow: hidden;
}

.tri {
  display: block;
  width: 8px;
  height: 4px;
  background: #111;
  clip-path: polygon(0 0, 100% 0, 50% 100%);
}
.tri.small { width: 6px; height: 3px; }
.tri.up { width: 6px; height: 3px; clip-path: polygon(50% 0, 100% 100%, 0 100%); }
.tri.lft { width: 4px; height: 6px; clip-path: polygon(0 50%, 100% 0, 100% 100%); }
.tri.rgt { width: 4px; height: 6px; clip-path: polygon(0 0, 100% 50%, 0 100%); }

/* Menu bar */
.menubar {
  display: flex;
  flex: none;
  height: 16px;
  background: linear-gradient(#fdfdff, #e3e8f5 50%, #d5dcf0 55%, #dfe5f5);
  color: #666a72;
}
.logo { width: 16px; height: 15px; margin-left: 1px; }
.menus {
  display: flex;
  flex: 1;
  gap: 12px;
  padding-left: 7px;
  font: 11px/15px "Open Sans", "Noto Sans", sans-serif;
}
.win-btns { display: flex; }
.win-btns button {
  width: 18px;
  padding-left: 2px;
  border-left: 1px solid #9fb4cc;
  background: #dfeaf8;
}
.win-btns button:last-child { width: 6px; overflow: hidden; }
.win-btns svg { width: 12px; height: 12px; }

/* Toolbars */
.bars { flex: none; border-bottom: 2px solid #777; }
.bar {
  display: flex;
  align-items: center;
  height: 27px;
  padding-top: 2px;
  border-top: 1px solid #fff;
}
.bar + .bar { padding-top: 1px; height: 26px; border-top-color: #c8c8c8; }
.grip {
  flex: none;
  width: 4px;
  height: 22px;
  margin: 0 1px 0 2px;
  border: solid #b5b5b5;
  border-width: 0 1px;
  background: #fff;
}
.end {
  flex: none;
  width: 6px;
  height: 24px;
  margin-right: 3px;
  border-right: 1px solid #a2a2a2;
}
.sep { flex: none; width: 2px; height: 18px; margin: 0 2px; border-left: 1px solid #888; background: #fff; }
.combo + .sep { margin: 0 1px; }
.ib { flex: none; width: 22px; height: 20px; padding: 0 3px; }
.ib svg { width: 16px; height: 16px; }
.dd { flex: none; width: 10px; height: 20px; }
.dd::after {
  content: "";
  display: block;
  width: 6px;
  height: 3px;
  margin-left: 1px;
  background: #bbb;
  clip-path: polygon(0 0, 100% 0, 50% 100%);
}
.combo {
  position: relative;
  display: flex;
  flex: none;
  align-items: center;
  height: 20px;
  border: 1px solid #a9a9a9;
  background: #f0f0f0;
  color: #747474;
}
.combo select { flex: 1; min-width: 0; height: 18px; padding: 0 14px 0 3px; }
.combo.roomy select { padding-left: 8px; }
.combo::after, .combo::before { content: ""; position: absolute; pointer-events: none; }
.combo::before { top: 1px; right: 1px; bottom: 1px; width: 13px; background: #fff; }
.combo::after {
  top: 8px;
  right: 4px;
  width: 7px;
  height: 4px;
  background: #999;
  clip-path: polygon(0 0, 100% 0, 50% 100%);
}
.w95 { width: 95px; }
.w166 { width: 166px; }
.w145 { width: 145px; }
.w150 { width: 150px; }
.w118 { width: 118px; }
.w113 { width: 113px; }
.layer { width: 284px; padding-left: 5px; }
.layer svg { width: 62px; height: 16px; }
.swatch { flex: none; width: 10px; height: 10px; border: 1px solid #222; background: #fff; }
.swatch.first { margin-left: 5px; }
.line { flex: none; width: 57px; height: 1px; margin-left: 3px; background: #333; }
.line.short { width: 33px; }

/* Work area */
.work {
  display: grid;
  grid-template-columns: 46px 1fr 16px;
  flex: 1;
  min-height: 0;
}
.dock { display: flex; align-items: flex-start; overflow: hidden; }
.dock.left { gap: 1px; border-right: 2px solid #b5b5b5; }
.dock.right { flex-direction: column; padding-left: 5px; }
.col { display: flex; flex-direction: column; background: #f6f7f8; }
.col button { flex: none; height: 21px; }
.col svg { width: 16px; height: 16px; }
.col hr { width: 17px; height: 1px; margin: 2px 0; border: 0; background: #aaa; }
.ucs { width: 19px; padding: 9px 0 4px; border: solid #aaa; border-width: 0 1px 1px 0; }
.draw { width: 24px; height: 412px; padding: 9px 0 6px 3px; border-bottom: 1px solid #aaa; }
.draw button { flex: 1; min-height: 0; height: auto; }
.draw .letter { font: 16px/18px "Liberation Sans", sans-serif; text-align: left; padding-left: 2px; }
.edit { width: 20px; padding: 11px 0 2px 1px; border-bottom: 1px solid #aaa; }
.order { width: 20px; padding-left: 1px; }
.hgrip { height: 4px; margin: 3px 0 4px; border: solid #bbb; border-width: 1px 0; }

.canvas { position: relative; background: #000; overflow: hidden; }
.drawing { position: absolute; inset: 0; width: 100%; height: 100%; }
.cad-text { fill: #fff; font-family: "Liberation Sans", sans-serif; text-anchor: middle; }
.cad-text .small { font-size: 7px; font-weight: bold; }
.cad-text .axis { font-size: 10px; }
.cad-text .big { font-size: 16px; fill: #ccc; font-family: "Open Sans", sans-serif; font-weight: 300; }

/* Dialog window */
.dialog {
  position: absolute;
  top: 19px;
  left: 302px;
  width: 588px;
  padding: 0 6px 6px 5px;
  border: 1px solid #e6f1fb;
  border-radius: 6px 6px 4px 4px;
  background: linear-gradient(#b3cde8, #c6dcf0 40%, #8fb0cf 45%, #b9d0e4);
  color: #222;
}
.title { display: flex; align-items: center; height: 26px; margin: 0 -6px 0 -5px; padding-left: 7px; border-radius: 5px 5px 0 0; background: linear-gradient(90deg, #e3edf7, #d3e2f1 18%, #a9c7e4 30%, #b5d0ea 75%, #a8c8e6 90%, #cfe2f3); }
.title > svg { width: 13px; height: 13px; }
.title h1 { flex: 1; margin: 0 0 0 6px; font: 11px/16px "Open Sans", "Noto Sans", sans-serif; }
.title button { align-self: flex-start; height: 17px; border: 1px solid #57687a; border-top: 0; }
.title button svg { width: 11px; height: 11px; margin: 0 auto; }
.help { width: 27px; border-radius: 0 0 0 4px; background: linear-gradient(#d7e3ef, #a9bccf 50%, #b9cadb); }
.close { width: 45px; margin-right: 5px; border-radius: 0 0 4px 0; background: linear-gradient(#e7a493, #cc4b35 50%, #b92c1a 55%, #d9694c); }

.dbody {
  display: grid;
  grid-template-columns: 91px 1fr;
  grid-template-rows: 24px 268px auto;
  column-gap: 9px;
  row-gap: 5px;
  padding: 5px 6px 7px 5px;
  border: 1px solid #6c8196;
  background: #f0f0f0;
}
.lbl-folder { padding-top: 6px; text-align: right; }
.toprow { display: flex; align-items: center; }
.dcombo { position: relative; display: flex; align-items: center; background: #fff; }
.dcombo select { flex: 1; min-width: 0; padding: 0 16px 0 4px; }
.dcombo::after {
  content: "";
  position: absolute;
  right: 4px;
  top: 50%;
  width: 8px;
  height: 4px;
  background: #111;
  clip-path: polygon(0 0, 100% 0, 50% 100%);
  pointer-events: none;
}
.look { flex: none; width: 211px; height: 22px; margin-right: 10px; padding: 0 0 2px 5px; border-top: 1px solid #c5ced8; }
.look svg { width: 15px; height: 16px; }
.look select { padding-left: 2px; }
.toprow button { width: 24px; padding: 0 4px; }
.toprow button svg { width: 16px; height: 16px; }
.toprow .txt { display: flex; flex: none; align-items: center; justify-content: space-between; width: 59px; padding: 0; }
.toprow .view { width: 43px; margin: 0 13px 0 3px; }

.places { grid-row: 2 / 4; display: flex; flex-direction: column; height: 346px; padding-top: 1px; border: 1px solid #7c8fa5; background: #b9c8d9; color: #fff; }
.places button { display: flex; flex-direction: column; align-items: center; height: 57px; }
.places svg { width: 38px; height: 37px; padding: 3px; }
.places .on svg { border: solid #223; border-width: 1px 0 0 1px; background: #c1cedd; }
.places span { margin-top: 4px; line-height: 14px; white-space: nowrap; }

.listwrap { display: grid; grid-template-columns: 1fr 14px; grid-template-rows: 253px 15px; }
.list { overflow: hidden; background: #fff; }
table { width: 100%; height: 253px; border-collapse: collapse; table-layout: fixed; font: 11px/16px "Open Sans", "Noto Sans", sans-serif; background: linear-gradient(90deg, transparent 256px, #eee 256px, #eee 257px, transparent 257px, transparent 370px, #eee 370px, #eee 371px, transparent 371px); }
.c1 { width: 257px; }
.c2 { width: 114px; }
th { height: 22px; padding: 0 0 0 5px; text-align: left; font-weight: normal; border-right: 1px solid #dfe5ea; border-bottom: 1px solid #dde3e8; background: linear-gradient(#fff, #f2f3f5); }
th.sorted { background: linear-gradient(#f4fbfe, #cdeaf2); }
th.sorted::after { content: ""; float: right; width: 6px; height: 3px; margin-right: 125px; background: #567; clip-path: polygon(50% 0, 100% 100%, 0 100%); }
tbody::after { content: ""; display: table-row; height: 14px; }
td { height: 18px; padding: 0 0 0 5px; overflow: hidden; white-space: nowrap; }
td:first-child { padding-left: 8px; }
td svg { float: left; width: 13px; height: 15px; margin: 0 4px 0 0; }

.vscroll { display: flex; flex-direction: column; align-items: center; padding: 7px 0; background: #f0f0f0; }
.track { display: flex; flex: 1; align-items: flex-end; align-self: stretch; padding-bottom: 8px; }
.vscroll .thumb { display: flex; flex-direction: column; justify-content: center; align-items: center; gap: 2px; width: 14px; height: 86px; border: 1px solid #999; border-radius: 2px; background: linear-gradient(90deg, #f4f4f4, #cfcfcf); }
.vscroll .thumb i { width: 6px; height: 1px; background: #555; }
.hscroll { display: flex; background: #eaeaea; }
.hscroll button { display: flex; align-items: center; justify-content: center; width: 15px; border: 1px solid #aaa; border-radius: 2px; background: linear-gradient(#fafafa, #d5d5d5); }
.hscroll .thumb { display: flex; justify-content: center; align-items: center; gap: 2px; width: 329px; margin-left: 2px; border: 1px solid #3c7fb1; border-radius: 2px; background: linear-gradient(#e8f6fd, #c2e4f6 45%, #93cdec 50%, #a7d8f2); }
.hscroll .thumb i { width: 1px; height: 6px; background: #246; }
.rest { flex: 1; }

.fields { display: grid; grid-template-columns: 73px 1fr 78px; gap: 9px 0; padding-top: 23px; }
.fields label { align-self: end; padding-left: 2px; }
.fields .dcombo { height: 20px; margin-right: 5px; }
.fields button { height: 20px; border: 1px solid #777; border-radius: 3px; background: linear-gradient(#f4f4f4, #ebebeb 50%, #dcdcdc 52%, #d0d0d0); }
.name { border: 1px solid #b6d2ea; }
.dcombo.name input { flex: none; width: 106px; margin-left: 1px; background: #3c94e6; color: #fff; height: 14px; }
.type { border: 1px solid #777; border-radius: 2px; background: linear-gradient(#f2f2f2, #ebebeb 50%, #dcdcdc 52%, #d0d0d0); }

.cursor { position: absolute; top: 301px; left: 154px; width: 12px; height: 19px; }

/* Layout tabs */
.tabs { display: flex; flex: none; height: 14px; margin-left: 46px; }
.step { width: 18px; padding: 0 4px; border-right: 1px solid #ccc; background: #fff; }
.step svg { width: 9px; height: 9px; }
.tab { position: relative; width: 50px; margin-right: -9px; }
.tab.active { z-index: 1; width: 52px; color: #fff; }
.tab svg { position: absolute; inset: 0; width: 100%; height: 14px; }
.tab span { position: relative; }

/* Command line */
.command { display: flex; flex: none; margin-top: 7px; padding-top: 8px; border-top: 2px solid #777; }
.cgrip { width: 4px; margin: 0 4px 3px 3px; border: solid #b5b5b5; border-width: 0 1px; }
.console { flex: 1; border: solid #888; border-width: 2px 0 0 2px; background: #fff; font: 13px/15px "Liberation Mono", "Courier New", monospace; }
.history { display: flex; justify-content: space-between; height: 22px; border-bottom: 1px solid #777; }
.history p { margin: 0; }
.cv { display: flex; flex-direction: column; justify-content: space-around; width: 8px; }
.prompt { display: flex; align-items: center; height: 19px; }
.prompt input { flex: 1; min-width: 0; }
.ch { display: flex; align-items: center; justify-content: space-between; width: 76px; height: 18px; padding: 0 20px 0 7px; background: #f0f0f0; }
.ch b { width: 14px; height: 14px; margin-right: 12px; border: 1px solid #aaa; border-radius: 2px; background: linear-gradient(90deg, #f8f8f8, #ddd); }

/* Status bar */
.status { display: flex; flex: none; align-items: flex-start; height: 18px; padding-top: 3px; border-top: 1px solid #999; font-size: 10px; overflow: hidden; }
.coords { width: 162px; height: 20px; padding: 1px 0 0 1px; border: solid #aaa; border-width: 1px 1px 0 0; }
.status button { height: 20px; padding: 0 4px; border: solid #ccc; border-width: 0 1px 0 0; line-height: 17px; }
.status .in { margin-left: 2px; padding: 0 3px; border: solid #222; border-width: 1px 0 0 1px; line-height: 15px; }
.tray { display: flex; align-items: center; gap: 4px; height: 15px; margin-left: auto; }
.tray svg { width: 16px; height: 14px; }
.tray .tri { margin: 6px 4px 0; }
.tray .full { width: 8px; }
```
